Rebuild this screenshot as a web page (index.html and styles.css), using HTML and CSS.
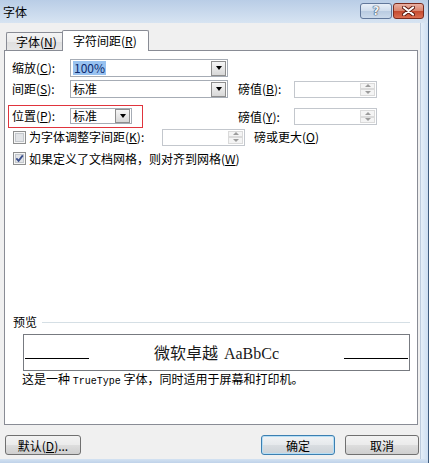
FILE: index.html
```html
<!DOCTYPE html>
<html lang="zh-CN">
<head>
<meta charset="utf-8">
<title>字体</title>
<link rel="stylesheet" href="styles.css">
</head>
<body>
<div class="screen">
  <div class="window">
    <div class="titlebar">
      <span class="title">字体</span>
      <div class="tb-buttons">
        <div class="tb-btn help">?</div>
        <div class="tb-btn close">
          <svg width="13" height="10" viewBox="0 0 13 10"><path d="M2 1.5 L11 8.5 M11 1.5 L2 8.5" stroke="#5a1a10" stroke-width="4" stroke-linecap="round"/><path d="M2 1.5 L11 8.5 M11 1.5 L2 8.5" stroke="#ffffff" stroke-width="2.2" stroke-linecap="round"/></svg>
        </div>
      </div>
    </div>
    <div class="mid">
      <div class="client">
        <div class="tabs">
          <div class="tab">字体(<u>N</u>)</div>
          <div class="tab active">字符间距(<u>R</u>)</div>
        </div>
        <div class="panel">
          <div class="row r1">
            <span class="lbl">缩放(<u>C</u>):</span>
            <div class="combo wide"><span class="val"><span class="sel">100%</span></span><span class="dd"></span></div>
          </div>
          <div class="row r2">
            <span class="lbl">间距(<u>S</u>):</span>
            <div class="combo wide"><span class="val">标准</span><span class="dd"></span></div>
            <span class="lbl2 gap-b">磅值(<u>B</u>):</span>
            <div class="spin"><span class="sb"><span class="up"></span><span class="down"></span></span></div>
          </div>
          <div class="row r3">
            <div class="hl">
              <span class="lbl">位置(<u>P</u>):</span>
              <div class="combo narrow"><span class="val">标准</span><span class="dd"></span></div>
            </div>
            <span class="lbl2 gap-y">磅值(<u>Y</u>):</span>
            <div class="spin"><span class="sb"><span class="up"></span><span class="down"></span></span></div>
          </div>
          <div class="row r4">
            <span class="chk">
              <svg width="13" height="13" viewBox="0 0 13 13"><rect x="0.5" y="0.5" width="12" height="12" fill="#f6f6f6" stroke="#8e8f8f"/><rect x="2.5" y="2.5" width="8" height="8" fill="#e2e4e7" stroke="#c3c7cc"/></svg>
            </span>
            <span class="k-lbl">为字体调整字间距(<u>K</u>):</span>
            <div class="spin"><span class="sb"><span class="up"></span><span class="down"></span></span></div>
            <span class="o-lbl">磅或更大(<u>O</u>)</span>
          </div>
          <div class="row r5">
            <span class="chk">
              <svg width="13" height="13" viewBox="0 0 13 13"><rect x="0.5" y="0.5" width="12" height="12" fill="#f6f6f6" stroke="#8e8f8f"/><rect x="2.5" y="2.5" width="8" height="8" fill="#e2e4e7" stroke="#c3c7cc"/><path d="M3.3 6.3 L5.6 8.8 L9.8 3.4" fill="none" stroke="#3a4f8c" stroke-width="1.8"/></svg>
            </span>
            <span>如果定义了文档网格，则对齐到网格(<u>W</u>)</span>
          </div>
          <div class="preview">
            <div class="sec-head"><span>预览</span><span class="rule"></span></div>
            <div class="pbox">
              <span class="pline"></span>
              <span class="sample"><span class="cjk">微软卓越</span><span class="serif">AaBbCc</span></span>
              <span class="pline"></span>
            </div>
            <p class="info">这是一种 <span class="mono">TrueType</span> 字体，同时适用于屏幕和打印机。</p>
          </div>
        </div>
        <div class="buttons">
          <button class="btn wide">默认(<u>D</u>)...</button>
          <button class="btn default">确定</button>
          <button class="btn">取消</button>
        </div>
      </div>
      <div class="side-frame"></div>
    </div>
    <div class="bottom-frame"></div>
  </div>
  <div class="outside"></div>
</div>
</body>
</html>
```

FILE: styles.css
```css
* { box-sizing: border-box; }
html, body { margin: 0; padding: 0; }
body {
  width: 432px;
  height: 463px;
  overflow: hidden;
  background: #ffffff;
  font-family: "Noto Sans CJK SC", "Liberation Sans", sans-serif;
  font-size: 12px;
  color: #000;
}
u { text-decoration: underline; }

.screen { display: flex; width: 432px; height: 463px; }
.window {
  width: 429px;
  height: 463px;
  flex: none;
  display: flex;
  flex-direction: column;
  border-right: 1px solid #3e5b7d;
}
.outside { flex: 1; background: #fff; }

.titlebar {
  height: 23px;
  flex: none;
  display: flex;
  align-items: flex-start;
  background: linear-gradient(#b9cde6, #d7e4f2);
}
.title { flex: 1; padding-left: 3px; line-height: 23px; }
.tb-buttons { display: flex; gap: 1px; margin-top: 3px; margin-right: 4px; }
.tb-btn {
  height: 16px;
  border: 1px solid #61779a;
  border-radius: 3px;
  display: flex;
  align-items: center;
  justify-content: center;
}
.help {
  width: 32px;
  background: linear-gradient(#e8eff8, #cfdcec 50%, #b9cbe1 51%, #cbdaeb);
  color: #eef1f5;
  font: bold 12px "DejaVu Sans", sans-serif;
  text-shadow: 0 0 1px #33445e, 0 0 1px #33445e, 0 0 1px #33445e;
}
.close {
  width: 31px;
  border-color: #7b2b1e;
  background: linear-gradient(#eab0a2, #d9836d 50%, #c44a2f 51%, #dc6e51);
}

.mid { flex: 1; display: flex; min-height: 0; }
.client {
  width: 420px;
  flex: none;
  background: #f0f0f0;
  padding: 7px 2px 4px 4px;
  display: flex;
  flex-direction: column;
}
.side-frame {
  flex: 1;
  background: linear-gradient(90deg, #e4eef8, #cddef1);
  border-left: 1px solid #bccbdd;
}
.bottom-frame {
  height: 4px;
  flex: none;
  background: linear-gradient(#d3e2f2, #bfd2e9);
}

.tabs { display: flex; align-items: flex-end; height: 20px; flex: none; padding-left: 2px; }
.tab {
  width: 56px;
  height: 18px;
  padding-left: 9px;
  line-height: 17px;
  border: 1px solid #898c95;
  border-bottom: none;
  border-right: none;
  border-radius: 2px 0 0 0;
  background: linear-gradient(#f4f4f4, #ebebeb 50%, #dfdfdf 51%, #e6e6e6);
  white-space: nowrap;
}
.tab.active {
  width: 87px;
  height: 21px;
  margin-bottom: -1px;
  padding-left: 10px;
  line-height: 19px;
  background: #ffffff;
  border-right: 1px solid #898c95;
  border-radius: 2px 2px 0 0;
  position: relative;
  z-index: 1;
}

.panel {
  height: 375px;
  flex: none;
  border: 1px solid #898c95;
  background: #ffffff;
  display: flex;
  flex-direction: column;
  padding: 8px 7px 35px 7px;
}

.row { display: flex; align-items: center; flex: none; white-space: nowrap; }
.r1 { height: 18px; }
.r2 { height: 18px; margin-top: 3px; }
.r3 { height: 23px; margin-top: 7px; }
.r4 { height: 16px; margin-top: 1px; }
.r5 { height: 14px; margin-top: 6px; }

.lbl { width: 58px; line-height: 14px; flex: none; }
.lbl2 { width: 56px; line-height: 14px; flex: none; }
.gap-b { margin-left: 10px; }
.gap-y { margin-left: 95px; }

.hl {
  display: flex;
  align-items: center;
  margin-left: -4px;
  padding: 2px 10px 3px 3px;
  border: 1px solid #e0343d;
  height: 23px;
}

.combo {
  height: 18px;
  border: 1px solid #a6acb5;
  background: #fff;
  display: flex;
  align-items: center;
  padding: 0 1px 0 2px;
  flex: none;
}
.combo.wide { width: 158px; }
.combo.narrow { width: 62px; height: 16px; }
.val { flex: 1; line-height: 14px; display: flex; }
.sel { background: #98c2f0; color: #0d2a6e; padding: 0 1px; }
.dd {
  width: 15px;
  height: 15px;
  border: 1px solid #8e8e8e;
  background: linear-gradient(#f6f6f6, #d8d8d8);
  display: flex;
  align-items: center;
  justify-content: center;
}
.narrow .dd { height: 14px; }
.dd::after {
  content: "";
  border-left: 3.5px solid transparent;
  border-right: 3.5px solid transparent;
  border-top: 4px solid #000;
}

.spin {
  width: 83px;
  height: 17px;
  flex: none;
  border: 1px solid #c3c7cd;
  background: #fff;
  display: flex;
  justify-content: flex-end;
  padding: 1px;
}
.sb { width: 15px; display: flex; flex-direction: column; }
.sb span {
  flex: 1;
  border: 1px solid #dadada;
  background: #f4f4f4;
  display: flex;
  align-items: center;
  justify-content: center;
}
.sb .up::after {
  content: "";
  border-left: 3px solid transparent;
  border-right: 3px solid transparent;
  border-bottom: 3px solid #9c9c9c;
}
.sb .down::after {
  content: "";
  border-left: 3px solid transparent;
  border-right: 3px solid transparent;
  border-top: 3px solid #9c9c9c;
}

.chk { width: 13px; height: 13px; margin-left: 1px; margin-right: 3px; display: flex; flex: none; }
.k-lbl { width: 133px; flex: none; line-height: 14px; }
.o-lbl { margin-left: 9px; line-height: 14px; }

.preview { margin-top: auto; display: flex; flex-direction: column; }
.sec-head { height: 14px; display: flex; align-items: center; padding-left: 1px; line-height: 14px; }
.rule { flex: 1; height: 1px; background: #d5dfe5; margin-left: 5px; }
.pbox {
  height: 37px;
  margin: 5px 0 0 11px;
  border: 1px solid #777a80;
  display: flex;
  justify-content: space-between;
  align-items: center;
  padding: 0 1px;
}
.pline { width: 64px; height: 1px; background: #000; align-self: flex-end; margin-bottom: 11px; }
.sample { display: flex; align-items: baseline; gap: 6px; font-size: 16px; line-height: 20px; color: #1a1a1a; }
.cjk { font-family: "Noto Sans CJK SC", sans-serif; }
.serif { font-family: "Liberation Serif", serif; }
.info { margin: 1px 0 0 10px; line-height: 14px; white-space: nowrap; }
.mono { font-family: "Liberation Mono", monospace; font-size: 10px; }

.buttons { display: flex; gap: 10px; height: 20px; margin: 10px -1px 0 1px; flex: none; }
.btn {
  width: 74px;
  height: 20px;
  padding: 0;
  font: inherit;
  color: #000;
  border: 1px solid #707070;
  border-radius: 3px;
  background: linear-gradient(#f3f3f3, #ebebeb 48%, #dddddd 52%, #cfcfcf);
}
.btn.wide { width: 76px; margin-right: auto; }
.btn.default {
  border-color: #3c7fb1;
  box-shadow: inset 0 0 0 1px #b6def5;
  background: linear-gradient(#f1f3f5, #e6e9ec 48%, #d9dde1 52%, #cdd2d7);
}
```
